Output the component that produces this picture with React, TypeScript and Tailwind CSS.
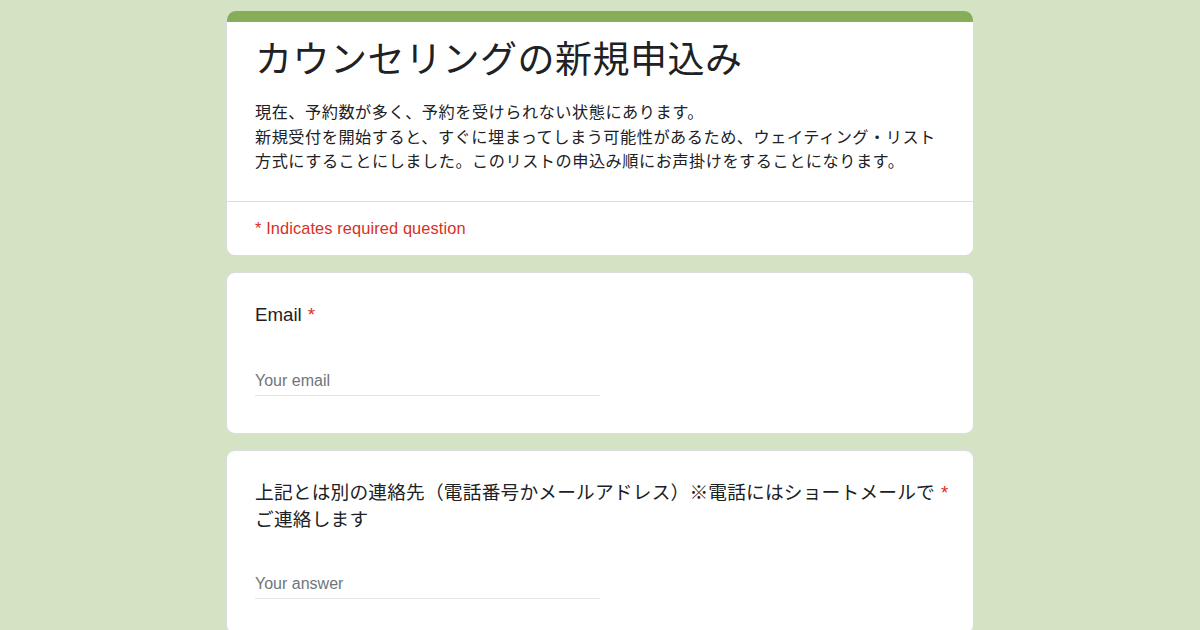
const FONT = "font-['Liberation_Sans','Noto_Sans_CJK_JP',sans-serif]";

function Required() {
  return <span className="text-[#d93025] ml-[6px]">*</span>;
}

function AnswerLine({ placeholder }: { placeholder: string }) {
  return (
    <div className="w-[345px] border-b border-[#e3e3e3] pb-[2px]">
      <span className="text-[16px] leading-[20px] text-[#70757a]">{placeholder}</span>
    </div>
  );
}

export default function App() {
  return (
    <div className={`min-h-[630px] bg-[#d5e3c5] pt-[11px] pb-6 ${FONT}`}>
      <div className="w-[748px] mx-auto flex flex-col gap-[16px]">
        {/* header card */}
        <div className="bg-white rounded-[9px] overflow-hidden border border-[#dadce0] border-t-0">
          <div className="h-[11px] bg-[#86ae59]" />
          <div className="px-[28px] pt-[15px] pb-[27px]">
            <h1 className="text-[37px] leading-[48px] tracking-[0.5px] text-[#202124] font-normal">
              カウンセリングの新規申込み
            </h1>
            <p className="mt-[15px] text-[16.2px] leading-[24.5px] tracking-[0.5px] text-[#202124]">
              現在、予約数が多く、予約を受けられない状態にあります。
              <br />
              新規受付を開始すると、すぐに埋まってしまう可能性があるため、ウェイティング・リスト
              <br />
              方式にすることにしました。このリストの申込み順にお声掛けをすることになります。
            </p>
          </div>
          <div className="border-t border-[#dadce0] px-[28px] pt-[14px] pb-[15px]">
            <p className="text-[16.4px] leading-[24px] tracking-[0.1px] text-[#d93025]">* Indicates required question</p>
          </div>
        </div>

        {/* email card */}
        <div className="bg-white rounded-[9px] border border-[#dadce0] px-[28px] pt-[28px] pb-[37px]">
          <div className="text-[18.7px] leading-[28px] text-[#202124]">
            Email
            <Required />
          </div>
          <div className="mt-[40px]">
            <AnswerLine placeholder="Your email" />
          </div>
        </div>

        {/* contact card */}
        <div className="bg-white rounded-[9px] border border-[#dadce0] px-[28px] pt-[28px] pb-[34px]">
          <div className="text-[18.7px] leading-[27.5px] tracking-[0.2px] text-[#202124] whitespace-nowrap">
            上記とは別の連絡先（電話番号かメールアドレス）※電話にはショートメールで
            <Required />
            <br />
            ご連絡します
          </div>
          <div className="mt-[38px]">
            <AnswerLine placeholder="Your answer" />
          </div>
        </div>
      </div>
    </div>
  );
}
